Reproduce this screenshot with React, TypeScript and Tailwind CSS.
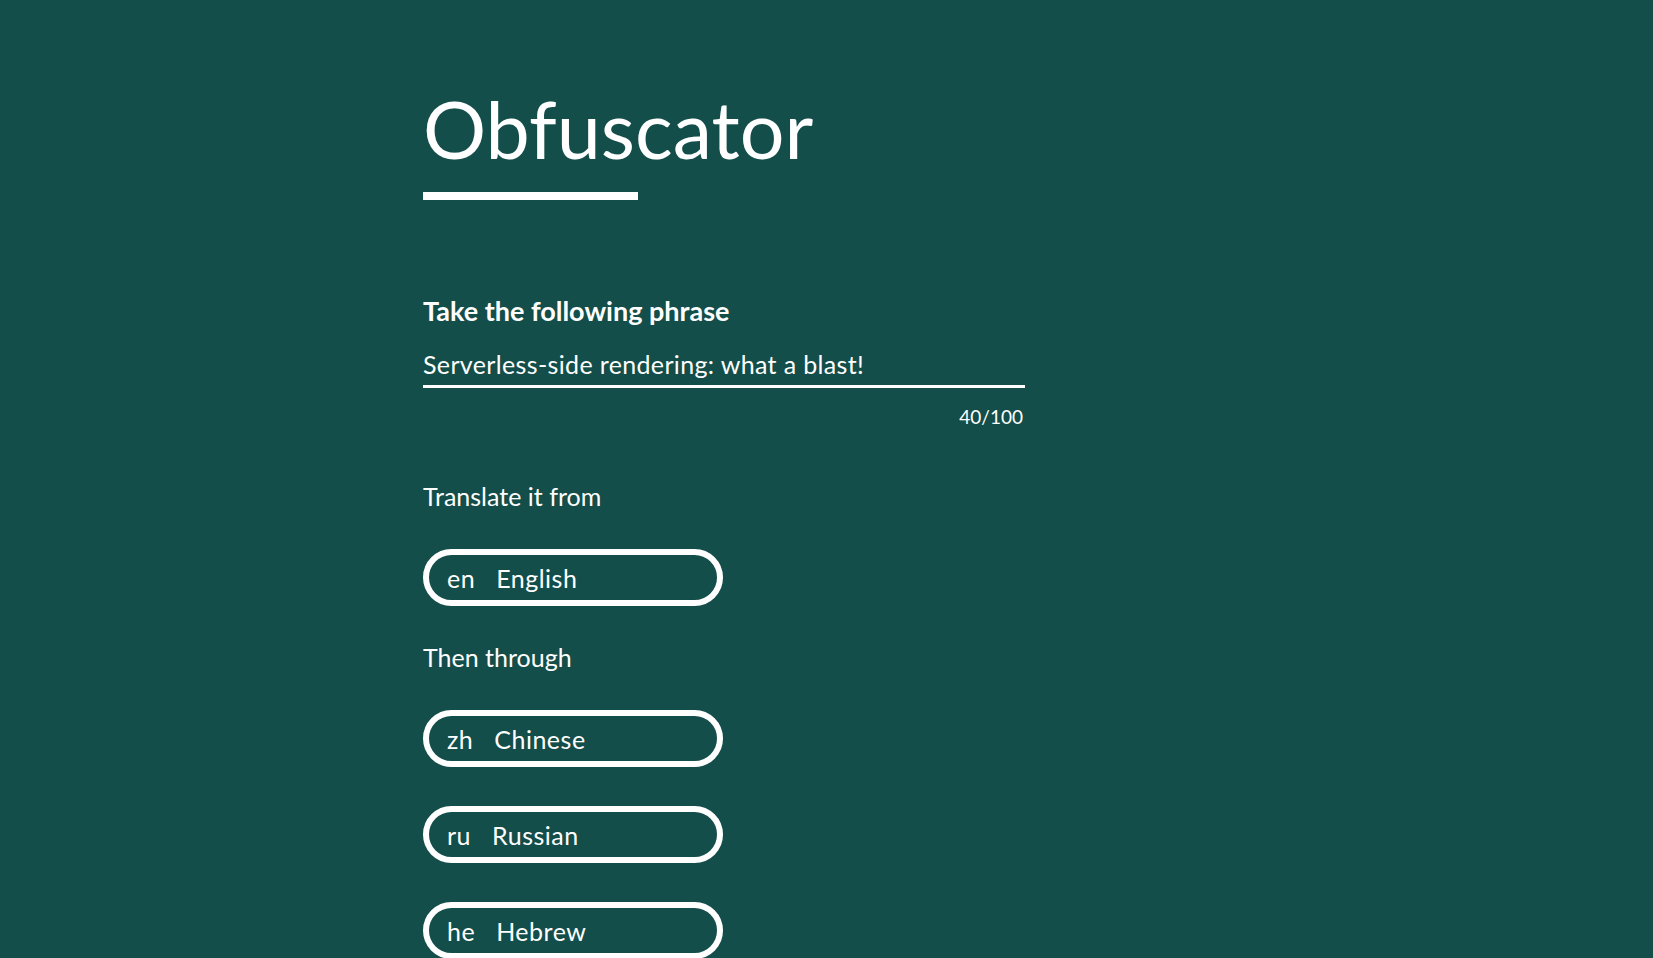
import React from "react";

const langs = [
  { code: "zh", name: "Chinese" },
  { code: "ru", name: "Russian" },
  { code: "he", name: "Hebrew" },
];

function Pill({ code, name }: { code: string; name: string }) {
  return (
    <div className="flex h-[57px] w-[300px] items-center gap-[21px] rounded-full border-[6px] border-white pl-[18px] text-[25px] leading-[32px] tracking-[0.5px]">
      <span>{code}</span>
      <span>{name}</span>
    </div>
  );
}

export default function App() {
  return (
    <div className="min-h-screen overflow-hidden bg-[#134e4a] font-['Lato',sans-serif] text-white">
      <div className="flex flex-col pl-[423px] pt-[89px]">
        <h1 className="text-[79px] leading-[80px] font-normal">Obfuscator</h1>
        <div className="mt-[23px] h-2 w-[215px] bg-white" />

        <div className="mt-[95px] text-[27px] leading-[32px] font-bold">
          Take the following phrase
        </div>
        <div className="mt-[21px] w-[602px] border-b-[3px] border-white pb-[5px] text-[25px] leading-[32px] font-normal tracking-[0.35px]">
          Serverless-side rendering: what a blast!
        </div>
        <div className="mt-[17px] w-[600px] text-right text-[19px] leading-[24px] font-normal">
          40/100
        </div>

        <div className="mt-[51px] text-[25px] leading-[32px] font-normal">
          Translate it from
        </div>
        <div className="mt-[37px]">
          <Pill code="en" name="English" />
        </div>

        <div className="mt-[35px] text-[25px] leading-[32px] font-normal">
          Then through
        </div>
        <div className="mt-[37px] flex flex-col gap-[39px]">
          {langs.map((l) => (
            <Pill key={l.code} code={l.code} name={l.name} />
          ))}
        </div>
      </div>
    </div>
  );
}
